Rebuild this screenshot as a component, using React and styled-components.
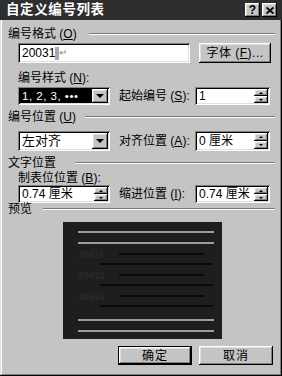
import styled, { createGlobalStyle, css } from "styled-components";

const GlobalStyle = createGlobalStyle`
  html, body {
    margin: 0;
    padding: 0;
    background: #c4c4c4;
  }
  body {
    font-family: "Liberation Sans", "Noto Sans CJK SC", sans-serif;
    font-size: 12px;
    line-height: 14px;
    color: #000;
  }
`;

const raised = css`
  background: #c4c4c4;
  box-shadow: inset -1px -1px #000, inset 1px 1px #fff, inset -2px -2px #808080,
    inset 2px 2px #dfdfdf;
`;

const sunken = css`
  background: #fff;
  box-shadow: inset 1px 1px #808080, inset -1px -1px #fff, inset 2px 2px #000,
    inset -2px -2px #dfdfdf;
`;

const Window = styled.div`
  width: 282px;
  height: 376px;
  box-sizing: border-box;
  background: #c4c4c4;
  box-shadow: inset -1px -1px #000, inset 1px 1px #dfdfdf, inset -2px -2px #808080,
    inset 2px 2px #fff;
  display: flex;
  flex-direction: column;
  overflow: hidden;
`;

const TitleBar = styled.div`
  height: 20px;
  background: #2e2e2e;
  display: flex;
  align-items: center;
  padding: 0 5px 0 6px;
`;

const Title = styled.div`
  flex: 1;
  color: #fff;
  font-weight: bold;
  font-size: 13.5px;
  letter-spacing: 0.6px;
`;

const TitleButton = styled.div`
  ${raised};
  width: 15px;
  height: 14px;
  margin-left: 2px;
  display: flex;
  align-items: center;
  justify-content: center;
  font-weight: bold;
  font-size: 12px;
  line-height: 1;
`;

const Content = styled.div`
  padding: 7px 7px 0 8px;
  display: flex;
  flex-direction: column;
`;

const Header = styled.div`
  height: 14px;
  margin-top: ${({ $top }) => $top}px;
  display: flex;
  align-items: center;
  white-space: nowrap;
  &::after {
    content: "";
    flex: 1;
    height: 0;
    margin-left: ${({ $gap }) => $gap}px;
    border-top: 1px solid #7a7a7a;
    border-bottom: 1px solid #fff;
  }
`;

const Label = styled.div`
  height: 14px;
  margin: ${({ $top }) => $top}px 0 0 10px;
  display: flex;
  align-items: center;
  white-space: nowrap;
`;

const InputRow = styled.div`
  margin: 1px 0 0 10px;
  display: flex;
  align-items: center;
  gap: 9px;
`;

const TextField = styled.div`
  ${sunken};
  width: 172px;
  height: 20px;
  box-sizing: border-box;
  padding: 0 4px;
  display: flex;
  align-items: center;
  margin-top: 1px;
`;

const Shade = styled.span`
  display: inline-block;
  width: 4px;
  height: 13px;
  background: #a8a8a8;
`;

const Mark = styled.span`
  color: #8a8a8a;
  font-size: 10px;
`;

const Button = styled.div`
  ${raised};
  width: ${({ $w }) => $w}px;
  height: ${({ $h }) => $h}px;
  display: flex;
  align-items: center;
  justify-content: center;
  white-space: nowrap;
  letter-spacing: ${({ $spacing }) => $spacing || 0}px;
  ${({ $default }) =>
    $default &&
    css`
      outline: 1px solid #000;
      outline-offset: -1px;
      box-shadow: inset -2px -2px #000, inset 2px 2px #fff, inset -3px -3px #808080,
        inset 3px 3px #dfdfdf;
    `}
`;

const FieldRow = styled.div`
  margin: ${({ $top }) => $top}px 0 0 10px;
  display: grid;
  grid-template-columns: 92px 85px 75px;
  align-items: center;
  height: ${({ $h }) => $h}px;
`;

const RowLabel = styled.div`
  padding-left: 9px;
  white-space: nowrap;
`;

const Combo = styled.div`
  ${sunken};
  height: 100%;
  box-sizing: border-box;
  padding: 2px;
  display: flex;
`;

const ComboValue = styled.div`
  flex: 1;
  display: flex;
  align-items: center;
  padding-left: 2px;
  font-size: ${({ $small }) => ($small ? 11.5 : 13)}px;
  letter-spacing: ${({ $small }) => ($small ? 0.5 : 0)}px;
  background: ${({ $selected }) => ($selected ? "#000" : "transparent")};
  color: ${({ $selected }) => ($selected ? "#fff" : "#000")};
  white-space: nowrap;
  overflow: hidden;
`;

const DropButton = styled.div`
  ${raised};
  width: 16px;
  display: flex;
  align-items: center;
  justify-content: center;
  &::after {
    content: "";
    border-left: 4px solid transparent;
    border-right: 4px solid transparent;
    border-top: 4px solid #000;
  }
`;

const Spin = styled.div`
  ${sunken};
  height: 100%;
  box-sizing: border-box;
  padding: 2px;
  display: flex;
`;

const SpinValue = styled.div`
  flex: 1;
  display: flex;
  align-items: center;
  padding-left: 2px;
  font-size: 12px;
  white-space: nowrap;
  overflow: hidden;
`;

const SpinButtons = styled.div`
  width: 14px;
  display: flex;
  flex-direction: column;
`;

const SpinArrow = styled.div`
  ${raised};
  flex: 1;
  display: flex;
  align-items: center;
  justify-content: center;
  &::after {
    content: "";
    border-left: 2px solid transparent;
    border-right: 2px solid transparent;
    ${({ $down }) =>
      $down ? "border-top: 2px solid #000;" : "border-bottom: 2px solid #000;"}
  }
`;

const Preview = styled.div`
  margin: 6px 0 0 55px;
  width: 159px;
  height: 117px;
  box-sizing: border-box;
  background: #1e1e1e;
  padding: 9px 0 0 15px;
  display: flex;
  flex-direction: column;
`;

const Line = styled.div`
  height: 2px;
  width: ${({ $w }) => $w}px;
  margin: ${({ $top }) => $top}px 0 0 ${({ $left }) => $left || 0}px;
  background: ${({ $light }) => ($light ? "#9c9c9c" : "#0a0a0a")};
`;

const Entry = styled.div`
  height: 11px;
  margin-top: 4px;
  display: flex;
  align-items: center;
`;

const EntryNum = styled.span`
  width: 41px;
  font-family: "Liberation Serif", serif;
  font-size: 11px;
  font-weight: bold;
  color: #2b2b2b;
  letter-spacing: -0.3px;
`;

const Footer = styled.div`
  margin-top: 7px;
  display: flex;
  justify-content: flex-end;
  gap: 7px;
  padding-right: 2px;
`;

const Key = ({ k }) => (
  <>
    {" ("}
    <u>{k}</u>
    {")"}
  </>
);

const SpinBox = ({ value }) => (
  <Spin>
    <SpinValue>{value}</SpinValue>
    <SpinButtons>
      <SpinArrow />
      <SpinArrow $down />
    </SpinButtons>
  </Spin>
);

const entries = ["20031", "20032", "20033"];

export default function App() {
  return (
    <>
      <GlobalStyle />
      <Window>
        <TitleBar>
          <Title>自定义编号列表</Title>
          <TitleButton>?</TitleButton>
          <TitleButton>
            <svg width="8" height="7" viewBox="0 0 8 7">
              <path d="M0.5 0.5 L7.5 6.5 M7.5 0.5 L0.5 6.5" stroke="#000" strokeWidth="1.8" />
            </svg>
          </TitleButton>
        </TitleBar>
        <Content>
          <Header $top={0} $gap={12}>
            编号格式<Key k="O" />
          </Header>
          <InputRow>
            <TextField>
              20031
              <Shade />
              <Mark>↵</Mark>
            </TextField>
            <Button $w={72} $h={20} $spacing={0.5}>
              字体<Key k="F" />...
            </Button>
          </InputRow>
          <Label $top={8}>
            编号样式<Key k="N" />:
          </Label>
          <FieldRow $top={2} $h={16}>
            <Combo>
              <ComboValue $selected $small>
                1, 2, 3, •••
              </ComboValue>
              <DropButton />
            </Combo>
            <RowLabel>
              起始编号<Key k="S" />:
            </RowLabel>
            <SpinBox value="1" />
          </FieldRow>
          <Header $top={7} $gap={9}>
            编号位置<Key k="U" />
          </Header>
          <FieldRow $top={7} $h={20}>
            <Combo>
              <ComboValue>左对齐</ComboValue>
              <DropButton />
            </Combo>
            <RowLabel>
              对齐位置<Key k="A" />:
            </RowLabel>
            <SpinBox value="0 厘米" />
          </FieldRow>
          <Header $top={5} $gap={19}>
            文字位置
          </Header>
          <Label $top={1}>
            制表位位置<Key k="B" />:
          </Label>
          <FieldRow $top={0} $h={16}>
            <SpinBox value="0.74 厘米" />
            <RowLabel>
              缩进位置<Key k="I" />:
            </RowLabel>
            <SpinBox value="0.74 厘米" />
          </FieldRow>
          <Header $top={1} $gap={11}>
            预览
          </Header>
          <Preview>
            <Line $light $w={136} $top={0} />
            <Line $light $w={136} $top={9} />
            {entries.map((n) => (
              <div key={n}>
                <Entry>
                  <EntryNum>{n}</EntryNum>
                  <Line $w={85} $top={0} />
                </Entry>
                <Line $w={113} $top={4} $left={22} />
              </div>
            ))}
            <Line $light $w={136} $top={12} />
            <Line $light $w={136} $top={9} />
          </Preview>
          <Footer>
            <Button $w={74} $h={19} $default $spacing={1}>
              确定
            </Button>
            <Button $w={74} $h={19} $spacing={1}>
              取消
            </Button>
          </Footer>
        </Content>
      </Window>
    </>
  );
}
